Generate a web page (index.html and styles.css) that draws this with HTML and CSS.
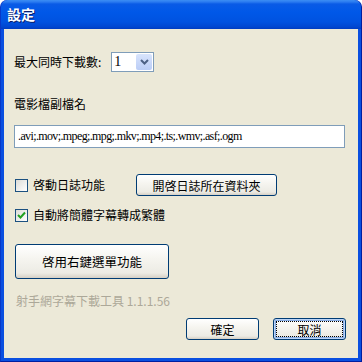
FILE: index.html
```html
<!DOCTYPE html>
<html>
<head>
<meta charset="utf-8">
<link rel="stylesheet" href="styles.css">
</head>
<body>
<div class="window">
  <div class="titlebar"><span class="title">設定</span></div>
  <div class="client">
    <div class="row row-max">
      <span class="label">最大同時下載數:</span>
      <div class="select">
        <span class="select-value">1</span>
        <span class="select-btn">
          <svg width="9" height="6" viewBox="0 0 9 6"><path d="M1 1 L4.5 4.5 L8 1" fill="none" stroke="#4D6185" stroke-width="2"/></svg>
        </span>
      </div>
    </div>
    <div class="label ext-label">電影檔副檔名</div>
    <div class="textbox">.avi;.mov;.mpeg;.mpg;.mkv;.mp4;.ts;.wmv;.asf;.ogm</div>
    <div class="row row-log">
      <span class="check"></span>
      <span class="label check-label">啓動日誌功能</span>
      <button class="btn btn-folder">開啓日誌所在資料夾</button>
    </div>
    <div class="row row-conv">
      <span class="check checked">
        <svg width="9" height="9" viewBox="0 0 9 9"><path d="M1 4 L3.5 6.5 L8 1.5" fill="none" stroke="#21A121" stroke-width="2"/></svg>
      </span>
      <span class="label check-label">自動將簡體字幕轉成繁體</span>
    </div>
    <button class="btn btn-big">啓用右鍵選單功能</button>
    <div class="version">射手網字幕下載工具 1.1.1.56</div>
    <div class="actions">
      <button class="btn btn-ok">確定</button>
      <button class="btn btn-cancel"><span class="focus">取消</span></button>
    </div>
  </div>
</div>
</body>
</html>
```
FILE: styles.css
```css
html, body {
  margin: 0;
  padding: 0;
  background: #ffffff;
}
body {
  width: 362px;
  height: 362px;
  overflow: hidden;
  font-family: "Noto Sans CJK TC", "Noto Sans", sans-serif;
  font-size: 12px;
  color: #000;
}
.window {
  width: 362px;
  height: 362px;
  box-sizing: border-box;
  background: #0A4FE0;
  border-radius: 7px 7px 0 0;
  display: flex;
  flex-direction: column;
  overflow: hidden;
  border-left: 1px solid #0838C8;
  border-right: 1px solid #001EA0;
  border-bottom: 1px solid #001EA0;
}
.titlebar {
  height: 29px;
  flex: none;
  background: linear-gradient(to bottom, #3C8EF3 0px, #2A7AF0 2px, #0A5BE6 4px, #0058E8 12px, #0052E0 22px, #0046D0 27px, #003CC0 29px);
  border-radius: 7px 7px 0 0;
  display: flex;
  align-items: center;
  padding-left: 6px;
}
.title {
  color: #fff;
  font-weight: bold;
  font-size: 14px;
  text-shadow: 1px 1px 0 #0A1E6A;
  margin-top: -1px;
}
.client {
  flex: 1;
  margin: 0 3px 3px 3px;
  background: #ECE9D8;
  padding: 0 13px 0 10px;
  display: flex;
  flex-direction: column;
  position: relative;
}
.row {
  display: flex;
  align-items: center;
}
.row-max {
  margin-top: 23px;
  height: 20px;
}
.label {
  line-height: 14px;
  white-space: nowrap;
}
.select {
  margin-left: 10px;
  width: 43px;
  height: 20px;
  box-sizing: border-box;
  border: 1px solid #7F9DB9;
  background: #fff;
  display: flex;
  align-items: stretch;
}
.select-value {
  flex: 1;
  font-family: "Liberation Serif", serif;
  font-size: 14px;
  line-height: 18px;
  padding-left: 2px;
}
.select-btn {
  width: 16px;
  margin: 1px;
  background: linear-gradient(to bottom, #D8E4FC, #BBCDF6);
  border-radius: 2px;
  display: flex;
  align-items: center;
  justify-content: center;
}
.ext-label {
  margin-top: 25px;
}
.textbox {
  margin-top: 14px;
  height: 23px;
  box-sizing: border-box;
  border: 1px solid #7F9DB9;
  background: #fff;
  font-family: "Liberation Serif", serif;
  font-size: 12px;
  letter-spacing: -0.62px;
  line-height: 21px;
  padding-left: 3px;
  white-space: nowrap;
  overflow: hidden;
}
.row-log {
  margin-top: 26px;
  height: 22px;
}
.check {
  width: 13px;
  height: 13px;
  box-sizing: border-box;
  border: 1px solid #1C5180;
  background: linear-gradient(135deg, #DCDCD7, #FFFFFF);
  margin-left: 1px;
  display: flex;
  align-items: center;
  justify-content: center;
  flex: none;
}
.check-label {
  margin-left: 5px;
}
.btn {
  font-family: "Noto Sans CJK TC", "Noto Sans", sans-serif;
  font-size: 12px;
  color: #000;
  border: 1px solid #003C74;
  border-radius: 3px;
  background: linear-gradient(to bottom, #FFFFFF 0%, #F6F5F0 40%, #ECEBE4 85%, #D6D0C5 100%);
  padding: 0;
  margin: 0;
  cursor: default;
}
.btn-folder {
  margin-left: 31px;
  width: 141px;
  height: 22px;
}
.row-conv {
  margin-top: 12px;
  height: 14px;
}
.btn-big {
  margin-top: 22px;
  margin-left: 1px;
  width: 154px;
  height: 35px;
  font-size: 12.5px;
}
.version {
  margin-top: 15px;
  margin-left: 2px;
  color: #ACA899;
  line-height: 14px;
}
.actions {
  display: flex;
  justify-content: flex-end;
  gap: 14px;
  margin-top: 10px;
  margin-right: -1px;
}
.btn-ok, .btn-cancel {
  width: 73px;
  height: 22px;
}
.btn-cancel {
  box-shadow: inset 0 0 0 1px #BCD4F6, inset 0 0 0 2px #89ADE4;
  padding: 2px;
}
.focus {
  display: flex;
  align-items: center;
  justify-content: center;
  width: 100%;
  height: 100%;
  box-sizing: border-box;
  border: 1px dotted #000;
}
```
